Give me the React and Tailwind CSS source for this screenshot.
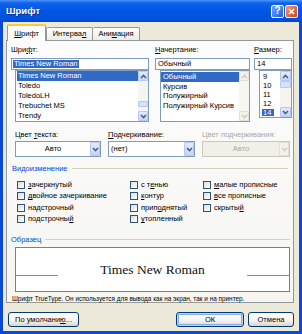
import React from 'react';

const U = ({ children }) => <span className="underline decoration-[0.5px] underline-offset-[1px]">{children}</span>;

function Chevron({ up, color = '#4D6185' }) {
  return (
    <svg width="7" height="5" viewBox="0 0 7 5">
      <path d={up ? 'M1 4L3.5 1.5L6 4' : 'M1 1L3.5 3.5L6 1'} fill="none" stroke={color} strokeWidth="1.6" />
    </svg>
  );
}

function ScrollBtn({ up, disabled }) {
  return (
    <div
      className={
        disabled
          ? 'h-[10px] flex items-center justify-center rounded-[1px] border border-[#E2E0D6] bg-[#F2F1EA]'
          : 'h-[10px] flex items-center justify-center rounded-[1px] border border-[#B4C8F6] bg-[linear-gradient(180deg,#E3EBFD,#C4D5FA)]'
      }
    >
      <Chevron up={up} color={disabled ? '#CFCDC2' : '#4D6185'} />
    </div>
  );
}

function FontList() {
  const items = ['Times New Roman', 'Toledo', 'ToledoLH', 'Trebuchet MS', 'Trendy'];
  return (
    <div className="ml-[4px] h-[52px] border border-[#7F9DB9] bg-white flex">
      <div className="flex-1 flex flex-col pl-[1px]">
        {items.map((t, i) => (
          <div key={t} className={i === 0 ? 'h-[10px] flex items-center pl-[1px] bg-[#316AC5] text-white' : 'h-[10px] flex items-center pl-[1px]'}>
            {t}
          </div>
        ))}
      </div>
      <div className="w-[10px] flex flex-col bg-[#F5F4EE]">
        <ScrollBtn up />
        <div className="flex-1 flex flex-col">
          <div className="h-[20px]" />
          <div className="h-[6px] rounded-[1px] border border-[#B4C8F6] bg-[#D6E1FB]" />
        </div>
        <ScrollBtn />
      </div>
    </div>
  );
}

function StyleList() {
  const items = ['Обычный', 'Курсив', 'Полужирный', 'Полужирный Курсив'];
  return (
    <div className="ml-[5px] h-[52px] border border-[#7F9DB9] bg-white flex">
      <div className="flex-1 flex flex-col pt-[1px]">
        {items.map((t, i) => (
          <div key={t} className={i === 0 ? 'h-[9.5px] flex items-center pl-[2px] bg-[#316AC5] text-white' : 'h-[9.5px] flex items-center pl-[2px]'}>
            {t}
          </div>
        ))}
      </div>
      <div className="w-[10px] flex flex-col bg-[#F7F6F1]">
        <ScrollBtn up disabled />
        <div className="flex-1" />
        <ScrollBtn disabled />
      </div>
    </div>
  );
}

function SizeList() {
  const items = ['9', '10', '11', '12', '14'];
  return (
    <div className="ml-[5px] h-[48px] border border-[#7F9DB9] bg-white flex">
      <div className="flex-1 flex flex-col pt-[1px] pl-[2px]">
        {items.map((t, i) => (
          <div key={t} className="h-[9.2px] flex items-center">
            <span className={i === 4 ? 'bg-[#316AC5] text-white px-[1px] pr-[3px]' : 'px-[1px]'}>{t}</span>
          </div>
        ))}
      </div>
      <div className="w-[11px] flex flex-col bg-[#F5F4EE]">
        <ScrollBtn up />
        <div className="flex-1 flex flex-col">
          <div className="h-[7px] rounded-[1px] border border-[#B4C8F6] bg-[#D6E1FB]" />
        </div>
        <ScrollBtn />
      </div>
    </div>
  );
}

function Combo({ label, value, center, disabled, width }) {
  return (
    <div className={width + ' flex flex-col'}>
      <div className={disabled ? 'h-[8px] leading-[8px] text-[#ACA899]' : 'h-[8px] leading-[8px]'}>{label}</div>
      <div
        className={
          disabled
            ? 'mt-[2px] h-[16px] border border-[#C9C7BA] bg-[#F0EFE8] flex items-center'
            : 'mt-[2px] h-[16px] border border-[#7F9DB9] bg-white flex items-center'
        }
      >
        <div className={center ? 'flex-1 text-center' : 'flex-1 pl-[2px]'}>
          <span className={disabled ? 'text-[#ACA899]' : ''}>{value}</span>
        </div>
        <div
          className={
            disabled
              ? 'w-[10px] h-[14px] flex items-center justify-center border border-[#E2E0D6] bg-[#F2F1EA]'
              : 'w-[10px] h-[14px] flex items-center justify-center rounded-[1px] border border-[#B4C8F6] bg-[linear-gradient(180deg,#E3EBFD,#C4D5FA)]'
          }
        >
          <Chevron color={disabled ? '#CFCDC2' : '#4D6185'} />
        </div>
      </div>
    </div>
  );
}

function Check({ children }) {
  return (
    <div className="h-[11.5px] flex items-center">
      <div className="w-[8px] h-[8px] border border-[#2F5377] bg-[linear-gradient(135deg,#DCDCD7,#FFFFFF)] mr-[3px]" />
      <span>{children}</span>
    </div>
  );
}

function Button({ children, width, def }) {
  return (
    <div
      className={
        width +
        ' h-[15px] rounded-[3px] border border-[#003C74] bg-[linear-gradient(180deg,#FFFFFF,#F4F3EE_60%,#D8D4C8)] flex items-center justify-center ' +
        (def ? 'shadow-[inset_0_0_0_1px_#BCD2F6,inset_0_0_0_2px_#8AADF0]' : '')
      }
    >
      {children}
    </div>
  );
}

export default function App() {
  return (
    <div className="w-[302px] h-[334px] flex flex-col bg-[#0A48D6] font-['Liberation_Sans',Arial,sans-serif] text-[7.5px] leading-none text-black overflow-hidden">
      {/* title bar */}
      <div className="h-[22px] flex items-center pl-[6px] pr-[4px] bg-[linear-gradient(180deg,#4A94F7_0%,#0E62EA_14%,#0357E5_45%,#0151DE_85%,#0346CF_100%)]">
        <span className="text-[9.5px] font-bold text-white [text-shadow:1px_1px_0_#0A2F8F]">Шрифт</span>
        <div className="ml-auto flex gap-[1px]">
          <div className="w-[13px] h-[13px] rounded-[2px] border border-white bg-[linear-gradient(135deg,#6AA3FF,#1F5EE8)] flex items-center justify-center text-white text-[10px] font-bold">?</div>
          <div className="w-[13px] h-[13px] rounded-[2px] border border-white bg-[linear-gradient(135deg,#F39A78,#D5401A)] flex items-center justify-center">
            <svg width="7" height="7" viewBox="0 0 7 7">
              <path d="M1 1L6 6M6 1L1 6" stroke="white" strokeWidth="1.6" />
            </svg>
          </div>
        </div>
      </div>

      {/* body */}
      <div className="flex-1 mx-[3px] mb-[3px] bg-[#ECE9D8] flex flex-col">
        <div className="mt-[2px] ml-[4px] h-[17px] flex items-end relative z-10 -mb-[1px]">
          <div className="w-[39px] h-[17px] bg-[#FCFCFE] border-x border-[#919B9C] border-t-[2px] border-t-[#FFC83C] rounded-t-[2px] flex items-center justify-center">
            <U>Ш</U>рифт
          </div>
          <div className="w-[47px] h-[13px] mb-[1px] bg-[linear-gradient(180deg,#FFFFFF,#ECEBE6)] border border-b-0 border-[#919B9C] rounded-t-[2px] flex items-center justify-center">
            Интерва<U>л</U>
          </div>
          <div className="w-[47px] h-[13px] mb-[1px] bg-[linear-gradient(180deg,#FFFFFF,#ECEBE6)] border border-b-0 border-l-0 border-[#919B9C] rounded-t-[2px] flex items-center justify-center">
            Ани<U>м</U>ация
          </div>
        </div>

        {/* tab panel */}
        <div className="ml-[3px] mr-[5px] h-[263px] border border-[#919B9C] bg-[linear-gradient(180deg,#FCFCFE,#F6F5F0)] flex flex-col">
          <div className="mt-[5px] pl-[4px] flex">
            <div className="w-[138px] flex flex-col">
              <div className="h-[8px] leading-[8px]">Шри<U>ф</U>т:</div>
              <div className="mt-[4px] h-[12px] border border-[#7F9DB9] bg-white flex items-center pl-[1px]">
                <span className="bg-[#316AC5] text-white px-[1px]">Times New Roman</span>
              </div>
              <FontList />
            </div>
            <div className="ml-[6px] w-[95px] flex flex-col">
              <div className="h-[8px] leading-[8px]"><U>Н</U>ачертание:</div>
              <div className="mt-[4px] h-[12px] border border-[#7F9DB9] bg-white flex items-center pl-[2px]">Обычный</div>
              <StyleList />
            </div>
            <div className="ml-[4px] w-[38px] flex flex-col">
              <div className="h-[8px] leading-[8px]"><U>Р</U>азмер:</div>
              <div className="mt-[4px] h-[12px] border border-[#7F9DB9] bg-white flex items-center pl-[2px]">14</div>
              <SizeList />
            </div>
          </div>

          <div className="mt-[9px] pl-[8px] flex">
            <Combo width="w-[86px]" label={<>Цвет <U>т</U>екста:</>} value="Авто" center />
            <div className="w-[7px]" />
            <Combo width="w-[87px]" label={<><U>П</U>одчеркивание:</>} value="(нет)" />
            <div className="w-[7px]" />
            <Combo width="w-[88px]" label="Цвет подчеркивания:" value="Авто" center disabled />
          </div>

          <div className="mt-[8px] pl-[5px] pr-[5px] flex items-center h-[8px]">
            <span className="text-[#0046D5]">Видоизменение</span>
            <div className="flex-1 ml-[4px] h-px bg-[#D0D0BF]" />
          </div>

          <div className="mt-[6px] pl-[10px] flex">
            <div className="w-[113px] flex flex-col">
              <Check><U>з</U>ачеркнутый</Check>
              <Check><U>д</U>войное зачеркивание</Check>
              <Check>на<U>д</U>строчный</Check>
              <Check>подстрочны<U>й</U></Check>
            </div>
            <div className="w-[73px] flex flex-col">
              <Check>с т<U>е</U>нью</Check>
              <Check><U>к</U>онтур</Check>
              <Check>прип<U>о</U>днятый</Check>
              <Check><U>у</U>топленный</Check>
            </div>
            <div className="flex flex-col">
              <Check><U>м</U>алые прописные</Check>
              <Check><U>в</U>се прописные</Check>
              <Check>скрыты<U>й</U></Check>
            </div>
          </div>

          <div className="mt-[11px] pl-[4px] pr-[3px] flex items-center h-[8px]">
            <span className="text-[#0046D5]">Образец</span>
            <div className="flex-1 ml-[4px] h-px bg-[#D0D0BF]" />
          </div>

          <div className="mt-[3px] ml-[8px] w-[275px] h-[46px] border border-[#7F7F7F] bg-white flex items-start">
            <div className="mt-[27px] w-[42px] h-[1.5px] bg-[#8A8A8A]" />
            <div className="flex-1 mt-[15px] text-center font-['Liberation_Serif','Times_New_Roman',serif] text-[13.5px] leading-[14px] text-[#111]">
              Times New Roman
            </div>
            <div className="mt-[27px] w-[42px] h-[1.5px] bg-[#8A8A8A]" />
          </div>

          <div className="mt-[3px] pl-[5px] text-[6.4px] leading-[7px]">
            Шрифт TrueType. Он используется для вывода как на экран, так и на принтер.
          </div>
        </div>

        {/* bottom buttons */}
        <div className="mt-[9px] flex pl-[5px] pr-[5px]">
          <Button width="w-[71px]">По умолчани<U>ю</U>...</Button>
          <div className="flex-1" />
          <Button width="w-[68px]" def>ОК</Button>
          <div className="w-[4px]" />
          <Button width="w-[46px]">Отмена</Button>
        </div>
      </div>
    </div>
  );
}
